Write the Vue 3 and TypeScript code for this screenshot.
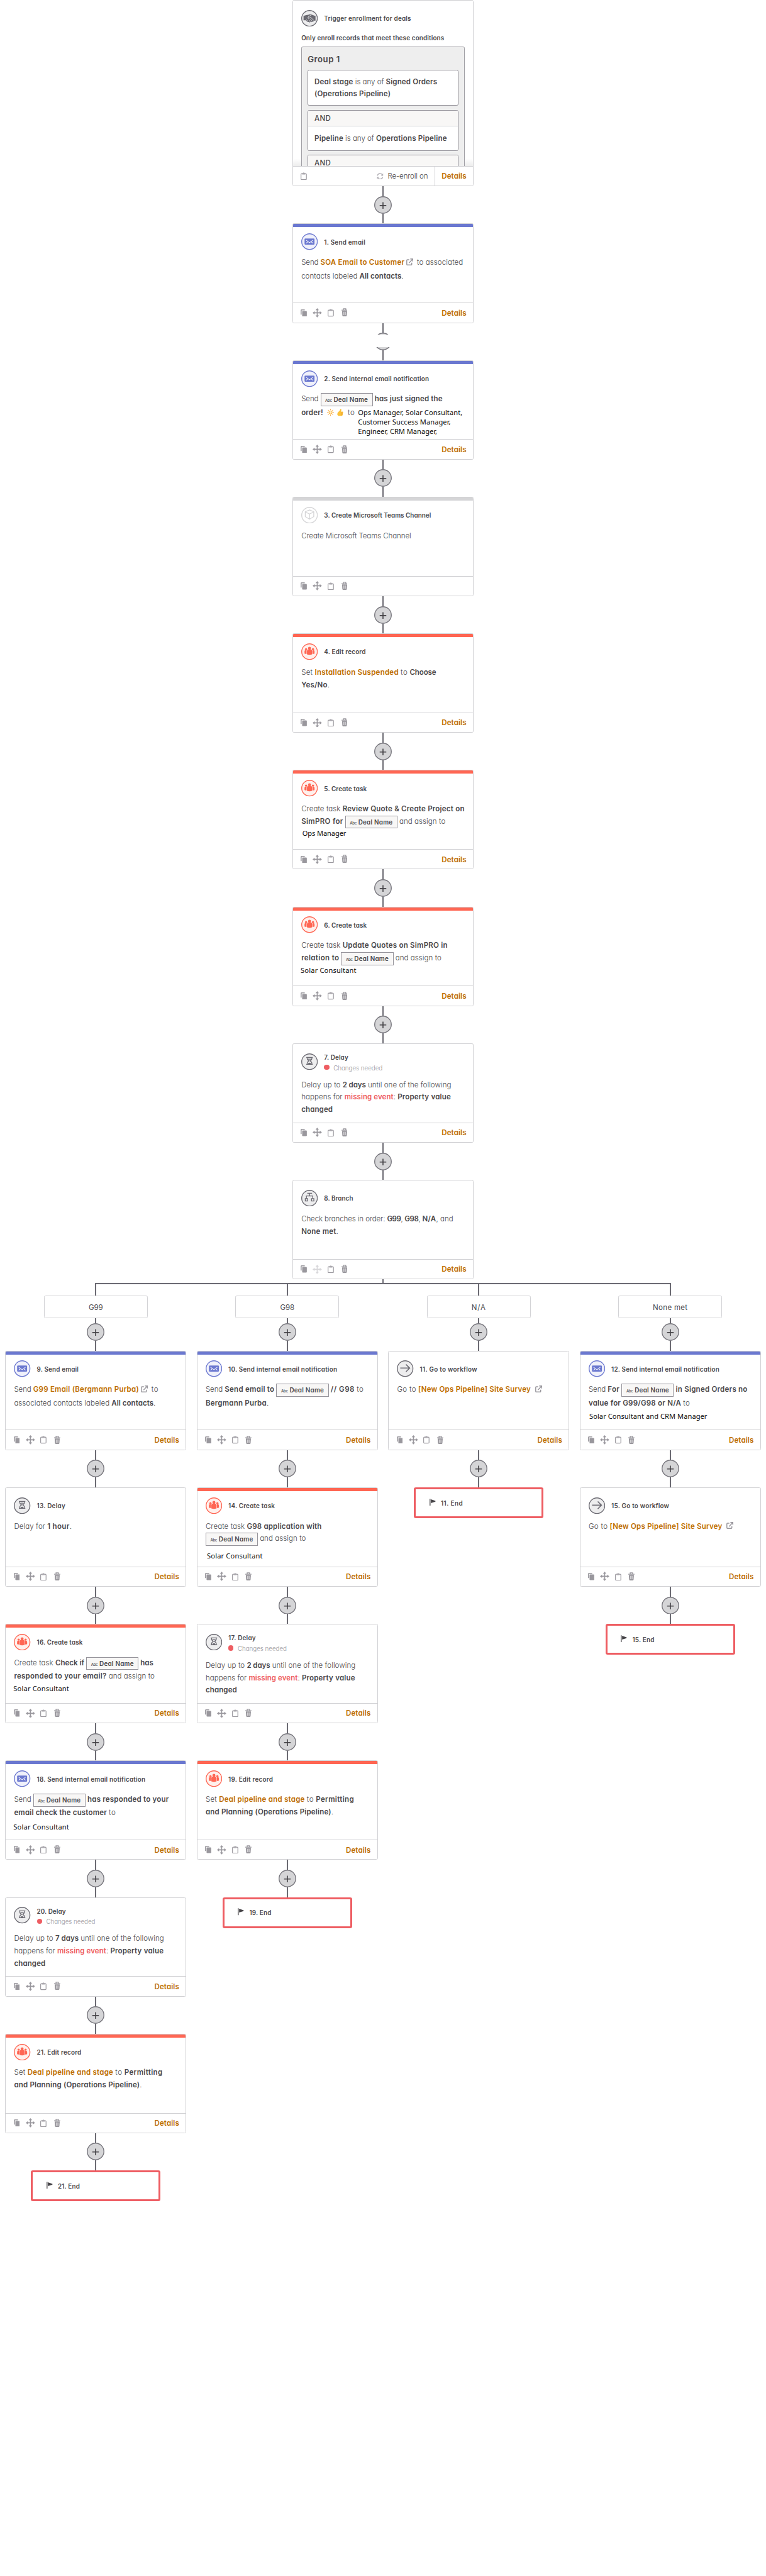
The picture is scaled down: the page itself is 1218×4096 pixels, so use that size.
<script setup lang="ts">
type Seg = { t?: string; w?: number; k?: 'b' | 'link' | 'err' | 'chip' | 'ext' | 'extw' | 'emoji'; tail?: string }
type Row = { segs: Seg[]; notes?: [string, number][] }
type Note = { t: string; w: number; mt: number; ml: number }
type Step = {
  kind: 'step' | 'end' | 'trigger'
  tone?: 'blue' | 'coral' | 'gray' | 'dark'
  icon?: 'mail' | 'people' | 'cube' | 'wait' | 'tree' | 'arrow'
  title: string
  tw: number
  rows?: Row[]
  note?: Note
  warn?: boolean
  noDetails?: boolean
  lockMove?: boolean
  broken?: boolean
}
type Column = { label?: string; lw?: number; steps: Step[] }

const DESIGN_WIDTH = 1480

// Spreads a run of text over its design width by adjusting the tracking.
const vFit = {
  mounted(el: HTMLElement, binding: { value?: number }) {
    if (!binding.value) return
    const root = el.closest('.flow') as HTMLElement
    const scale = root.getBoundingClientRect().width / DESIGN_WIDTH
    const natural = el.getBoundingClientRect().width / scale
    const count = (el.textContent ?? '').trim().length
    el.style.letterSpacing = `${((binding.value + 0.8 - natural) / count).toFixed(3)}px`
  },
}

const s = (t: string, w: number): Seg => ({ t, w })
const b = (t: string, w: number, tail = ''): Seg => ({ t, w, k: 'b', tail })
const link = (t: string, w: number): Seg => ({ t, w, k: 'link' })
const chip: Seg = { k: 'chip' }
const row = (...segs: Seg[]): Row => ({ segs })
const send = s('Send', 32.3)
const task = s('Create task', 75)
const assign = s('and assign to', 88.3)
const to = s('to', 13)

const delayRows = (days: string): Row[] => [
  row(s('Delay up to', 75), b(days, 44.3), s('until one of the following', 160.3)),
  row(s('happens for', 78.7), { t: 'missing event', w: 98, k: 'err', tail: ':' }, b('Property value', 102.3)),
  row(b('changed', 60)),
]
const stageRows: Row[] = [
  row(s('Set', 21.3), link('Deal pipeline and stage', 165), to, b('Permitting', 73)),
  row(b('and Planning (Operations Pipeline)', 246.3, '.')),
]
const surveyRows: Row[] = [
  row(s('Go to', 36.3), link('[New Ops Pipeline] Site Survey', 216.6), { k: 'extw' }),
]

const mail = (title: string, tw: number, rows: Row[], extra: Partial<Step> = {}): Step =>
  ({ kind: 'step', tone: 'blue', icon: 'mail', title, tw, rows, ...extra })
const crm = (title: string, tw: number, rows: Row[], note?: Note): Step =>
  ({ kind: 'step', tone: 'coral', icon: 'people', title, tw, rows, note })
const plain = (icon: Step['icon'], title: string, tw: number, rows: Row[], extra: Partial<Step> = {}): Step =>
  ({ kind: 'step', tone: 'dark', icon, title, tw, rows, ...extra })
const end = (n: number): Step => ({ kind: 'end', title: `${n}. End`, tw: 42 })
const solar = (mt: number, ml: number): Note => ({ t: 'Solar Consultant', w: 107, mt, ml })

const trunk: Column = {
  steps: [
    { kind: 'trigger', tone: 'dark', title: 'Trigger enrollment for deals', tw: 167.3 },
    mail('1. Send email', 79, [
      row(send, link('SOA Email to Customer', 161.7), { k: 'ext' }, s('to associated', 88.3)),
      row(s('contacts labeled', 107.7), b('All contacts', 84.3, '.')),
    ], { broken: true }),
    mail('2. Send internal email notification', 202, [
      row(send, chip, b('has just signed the', 130.3)),
      {
        segs: [b('order!', 41.3), { k: 'emoji' }, to],
        notes: [['Ops Manager, Solar Consultant,', 201], ['Customer Success Manager,', 178.3], ['Engineer, CRM Manager,', 152]],
      },
    ]),
    { kind: 'step', tone: 'gray', icon: 'cube', title: '3. Create Microsoft Teams Channel', tw: 205.7, noDetails: true,
      rows: [row(s('Create Microsoft Teams Channel', 211.3))] },
    crm('4. Edit record', 79.7, [
      row(s('Set', 21.3), link('Installation Suspended', 161.3), to, b('Choose', 50.3)),
      row(b('Yes/No', 54, '.')),
    ]),
    crm('5. Create task', 81.7, [
      row(task, b('Review Quote & Create Project on', 235)),
      row(b('SimPRO for', 80), chip, assign),
    ], { t: 'Ops Manager', w: 83.7, mt: 0, ml: 2 }),
    crm('6. Create task', 81.7, [
      row(task, b('Update Quotes on SimPRO in', 202.3)),
      row(b('relation to', 72.3), chip, assign),
    ], solar(1, -1.3)),
    plain('wait', '7. Delay', 46, delayRows('2 days'), { warn: true }),
    plain('tree', '8. Branch', 55.3, [
      row(s('Check branches in order:', 161), b('G99', 29.3, ','), b('G98', 29.7, ','), b('N/A', 30, ','), s('and', 24.3)),
      row(b('None met', 70.7, '.')),
    ], { lockMove: true }),
  ],
}

const branches: Column[] = [
  {
    label: 'G99', lw: 26.4,
    steps: [
      mail('9. Send email', 79.8, [
        row(send, link('G99 Email (Bergmann Purba)', 203.4), { k: 'ext' }, to),
        row(s('associated contacts labeled', 183.6), b('All contacts', 84.3, '.')),
      ]),
      plain('wait', '13. Delay', 54.3, [row(s('Delay for', 59.5), b('1 hour', 46.7, '.'))]),
      crm('16. Create task', 87.8, [
        row(task, b('Check if', 55.2), chip, b('has', 24)),
        row(b('responded to your email?', 178), assign),
      ], solar(3, -1.3)),
      mail('18. Send internal email notification', 209, [
        row(send, chip, b('has responded to your', 156.7)),
        row(b('email check the customer', 178.4), to),
      ], { note: solar(6, -1.3) }),
      plain('wait', '20. Delay', 55, delayRows('7 days'), { warn: true }),
      crm('21. Edit record', 85.3, stageRows),
      end(21),
    ],
  },
  {
    label: 'G98', lw: 26.4,
    steps: [
      mail('10. Send internal email notification', 209.5, [
        row(send, b('Send email to', 95.3), chip, b('// G98', 45.8), to),
        row(b('Bergmann Purba', 121.3, '.')),
      ]),
      crm('14. Create task', 89.2, [
        row(task, b('G98 application with', 144)),
        row(chip, assign),
      ], solar(10, 2.6)),
      plain('wait', '17. Delay', 52.4, delayRows('2 days'), { warn: true }),
      crm('19. Edit record', 85.4, stageRows),
      end(19),
    ],
  },
  {
    label: 'N/A', lw: 27,
    steps: [plain('arrow', '11. Go to workflow', 110, surveyRows), end(11)],
  },
  {
    label: 'None met', lw: 66.5,
    steps: [
      mail('12. Send internal email notification', 208, [
        row(send, b('For', 22.2), chip, b('in Signed Orders no', 137.8)),
        row(b('value for G99/G98 or N/A', 178), to),
      ], { note: { t: 'Solar Consultant and CRM Manager', w: 227, mt: 4, ml: 1.4 } }),
      plain('arrow', '15. Go to workflow', 111, surveyRows),
      end(15),
    ],
  },
]

const sections: Column[][] = [[trunk], branches]
const isTall = (r: Row) => r.segs.some(x => x.k === 'chip' || x.k === 'ext' || x.k === 'extw')
</script>

<template>
  <main class="flow">
    <template v-for="(section, si) in sections" :key="si">
      <div v-if="si === 1" class="split">
        <i class="line drop"></i>
        <i class="bar"></i>
      </div>
      <div class="section">
        <div v-for="(col, ci) in section" :key="ci" class="column">
          <template v-if="col.label">
            <i class="line stem"></i>
            <div class="label"><span v-fit="col.lw">{{ col.label }}</span></div>
            <i class="line short"></i>
            <svg class="plus" viewBox="0 0 34 34"><circle cx="17" cy="17" r="16.1" /><path d="M17 11.6v12.8M10.6 18h12.8" /></svg>
            <i class="line"></i>
          </template>

          <template v-for="(step, i) in col.steps" :key="step.title">
            <div v-if="step.kind === 'end'" class="end">
              <svg class="flag" viewBox="0 0 12 14"><path d="M1 .4v13.2" stroke="#434145" stroke-width="1.6" /><path d="M2.6 1.2 11.4 4.3v1.4L2.6 8.4z" fill="#434145" /></svg>
              <span v-fit="step.tw" class="title">{{ step.title }}</span>
            </div>

            <article v-else class="card" :class="[step.tone, step.kind]">
              <div v-if="step.tone !== 'dark'" class="band"></div>
              <div class="content">
                <header class="head" :class="{ warned: step.warn }">
                  <svg class="badge" viewBox="0 0 32 32">
                    <circle class="ring" cx="16" cy="16" r="15.1" />
                    <template v-if="step.kind === 'trigger'">
                      <path class="fill" d="M4.4 11.3 9.6 9.8l4.2-.6 2-.9 3.4.2 8.4 3v8.9l-3 .3-1.8 2.1-2.2-.2-1 .9-2-.3-1.6.9-1.6-1-2-.4-4.4-2.9-3.6-.2z" />
                      <path class="cut" d="M19.2 9.8 14 12.6l-1.2 3 2.2.5 3-2.3 6.2 6.2M17.6 17.6l3.4 4M14.6 19l3 3.8M8.4 20.4l2-1.4 1.4 1.4" />
                    </template>
                    <template v-else-if="step.icon === 'mail'">
                      <rect class="fill" x="6.4" y="10" width="19.2" height="12" rx="1.6" />
                      <path d="m9.4 13.2 5.3 4 1.3.8 1.3-.8 5.3-4M9.4 19l3-2.3M22.6 19l-3-2.3" fill="none" stroke="#f1f2fb" stroke-width="1.3" />
                    </template>
                    <g v-else-if="step.icon === 'people'" class="fill">
                      <circle cx="16" cy="9.6" r="2.9" /><path d="M11 21.4v-6.6q0-3 3-3h4q3 0 3 3v6.6q-5 1.4-10 0z" />
                      <circle cx="9.3" cy="11.1" r="2.1" /><path d="M6.3 19.6v-4.2q0-2.3 2.3-2.3h1.7v7.4q-2.5 0-4-.9z" />
                      <circle cx="22.7" cy="11.1" r="2.1" /><path d="M25.7 19.6v-4.2q0-2.3-2.3-2.3h-1.7v7.4q2.5 0 4-.9z" />
                    </g>
                    <path v-else-if="step.icon === 'cube'" class="stroke" d="m16 6 8.2 3.4v9.4L16 23.8 7.8 18.8V9.4zM7.8 9.7l8.2 4 8.2-4M16 13.7v10" />
                    <template v-else-if="step.icon === 'wait'">
                      <path class="stroke" d="M9.8 7.7h12.4M9.8 21.2h12.4M11.5 8v2.6q0 1.5 3.3 3.8-3.3 2.3-3.3 3.8V21M20.5 8v2.6q0 1.5-3.3 3.8 3.3 2.3 3.3 3.8V21M13 11.2h6" />
                      <path class="fill" d="M12.8 20.8q.6-2.800 3.200-2.800t3.200 2.800z" />
                    </template>
                    <path v-else-if="step.icon === 'tree'" class="stroke" d="M11.7 6.6h9.2M16 7v4.6M10 16.5v-4.7h12.2v4.7M7.8 16.8h4.6v4.6H7.8zM19.8 16.8h4.6v4.6h-4.6z" />
                    <path v-else class="stroke arrow" d="M6.6 15h18.2M17.6 7.9l7.2 7.1-7.2 7.1" />
                  </svg>
                  <div class="names">
                    <div><span v-fit="step.tw" class="title">{{ step.title }}</span></div>
                    <div v-if="step.warn" class="warn"><i></i><span v-fit="94">Changes needed</span></div>
                  </div>
                </header>

                <template v-if="step.kind === 'trigger'">
                  <div class="only"><span v-fit="275.3">Only enroll records that meet these conditions</span></div>
                  <div class="group">
                    <h3><span v-fit="62">Group 1</span></h3>
                    <div class="cond first">
                      <p><b v-fit="74">Deal stage</b><span v-fit="54.7">is any of</span><b v-fit="98.3">Signed Orders</b></p>
                      <p><b v-fit="146.3">(Operations Pipeline)</b></p>
                    </div>
                    <div class="cond second">
                      <div class="and"><span v-fit="30.7">AND</span></div>
                      <p><b v-fit="55">Pipeline</b><span v-fit="54.7">is any of</span><b v-fit="136.3">Operations Pipeline</b></p>
                    </div>
                    <div class="cond third"><div class="and"><span v-fit="30.7">AND</span></div></div>
                  </div>
                </template>

                <div v-else class="body">
                  <div v-for="(r, ri) in step.rows" :key="ri" class="row" :class="{ tall: isTall(r) }">
                    <template v-for="(seg, gi) in r.segs" :key="gi">
                      <span v-if="seg.k === 'chip'" class="chip"><small v-fit="12">Abc</small><span v-fit="65.7">Deal Name</span></span>
                      <svg v-else-if="seg.k === 'ext' || seg.k === 'extw'" class="ext" :class="seg.k" viewBox="0 0 14 14">
                        <path d="M6 2.6H2.2q-1.200 0-1.200 1.200v8q0 1.200 1.200 1.200h7.600q1.200 0 1.200-1.200V8.600M8 1h5v5M13 1 5.400 9" />
                      </svg>
                      <span v-else-if="seg.k === 'emoji'" class="emoji">
                        <svg viewBox="0 0 14 14"><circle cx="7" cy="7" r="3.2" fill="#fff2cf" stroke="#f9b13c" stroke-width="1.3" /><path d="M7 0v2.200M7 11.800V14M0 7h2.200M11.800 7H14M2 2l1.500 1.500M10.500 10.500 12 12M12 2l-1.500 1.500M3.500 10.500 2 12" stroke="#f9a94a" stroke-width="1.3" /></svg>
                        <svg viewBox="0 0 12 14"><path d="M6.300.300q1.900-.5 1.900 1.500 0 1.900-.9 3.700h3.200q1.300.2 1 1.600l-1 5.400q-.4 1.300-1.700 1.300H4.100Q.4 13.400.4 10.200.4 7 2.800 5.700 5.700 3.600 6.300.300z" fill="#fbc13a" /><path d="M7.400 7.400h4M7.300 9.500h3.700M7.200 11.600h3.400" stroke="#ee9b2b" stroke-width=".7" /></svg>
                      </span>
                      <span v-else v-fit="seg.w" class="seg"><span :class="seg.k">{{ seg.t }}</span>{{ seg.tail }}</span>
                    </template>
                    <div v-if="r.notes" class="notes">
                      <div v-for="n in r.notes" :key="n[0]"><span v-fit="n[1]">{{ n[0] }}</span></div>
                    </div>
                  </div>
                  <div v-if="step.note" class="note" :style="{ marginTop: step.note.mt + 'px', marginLeft: step.note.ml + 'px' }">
                    <span v-fit="step.note.w">{{ step.note.t }}</span>
                  </div>
                </div>
              </div>

              <footer class="foot">
                <svg v-if="step.kind !== 'trigger'" class="tool copy" viewBox="0 0 12 14"><path d="M1 10V2q0-1.100 1.100-1.100H8" fill="none" stroke="#99979d" stroke-width="1.9" /><rect x="3" y="3" width="9" height="11" rx="1.5" fill="#99979d" /></svg>
                <svg v-if="step.kind !== 'trigger'" class="tool move" :class="{ locked: step.lockMove }" viewBox="0 0 18 18"><path d="M9 3v12M3 9h12" stroke="currentColor" stroke-width="1.9" /><path d="m9 0 3.300 4H5.700zM9 18l3.300-4H5.700zM0 9l4-3.300v6.600zM18 9l-4-3.300v6.600z" fill="currentColor" /></svg>
                <svg class="tool clip" viewBox="0 0 12 15"><rect x=".8" y="2.5" width="10.4" height="11.7" rx="1.5" fill="none" stroke="#99979d" stroke-width="1.4" /><path d="M3 4.200V2.500q0-.9 1-.9h.6Q5 .2 6 .2t1.400 1.400H8q1 0 1 .9v1.700z" fill="#aaa8ae" /></svg>
                <svg v-if="step.kind !== 'trigger'" class="tool bin" viewBox="0 0 12 16"><path d="M0 3.700h12M3.700 3.400V1h4.600v2.400" fill="none" stroke="#99979d" stroke-width="1.6" /><path d="M1.100 5.300h9.800l-.6 9q-.1 1.400-1.400 1.400H3.100q-1.300 0-1.400-1.400z" fill="#99979d" /><path d="M4.600 7.200v6.200M7.400 7.200v6.200" stroke="#f3f3f4" stroke-width="1.1" /></svg>
                <span class="spacer"></span>
                <template v-if="step.kind === 'trigger'">
                  <svg class="tool again" viewBox="0 0 14 14"><path d="M1.400 5.600A5.600 5.600 0 0 1 11.600 3.800M12.600 8.400A5.600 5.600 0 0 1 2.400 10.200" fill="none" stroke="#b3b1b7" stroke-width="1.9" /><path d="M13.400 1v5H8.600zM.6 13V8h4.800z" fill="#b3b1b7" /></svg>
                  <span class="again-text"><span v-fit="76.7">Re-enroll on</span></span>
                </template>
                <span v-if="!step.noDetails" class="details"><span v-fit="47">Details</span></span>
              </footer>
            </article>

            <template v-if="i < col.steps.length - 1">
              <i class="line"></i>
              <div class="node" :class="{ broken: step.broken }">
                <svg class="plus" viewBox="0 0 34 34"><circle cx="17" cy="17" r="16.1" /><path d="M17 11.6v12.8M10.6 18h12.8" /></svg>
              </div>
              <i class="line"></i>
            </template>
          </template>
        </div>
      </div>
    </template>
  </main>
</template>

<style>
body { background: #fff; overflow: hidden; }
</style>

<style scoped>
.flow {
  width: 1480px;
  height: 4977px;
  zoom: 0.823;
  overflow: hidden;
  background: #fff;
  color: #4a484b;
  font-family: Inter, "Open Sans", sans-serif;
  font-feature-settings: "cv11";
  font-size: 14px;
  font-weight: 330;
}
.flow * { box-sizing: border-box; }
svg { display: block; flex: none; }
.section { display: flex; justify-content: center; }
.column { width: 370px; display: flex; flex-direction: column; align-items: center; }
.line { display: block; width: 2px; height: 19px; background: #6c6b73; }
.line.short { height: 10px; }
.line.stem { height: 22px; }
.line.drop { height: 8px; }
.split { display: flex; flex-direction: column; align-items: center; height: 10px; }
.bar { width: 1112px; height: 2.5px; flex: none; background: #6c6b73; }
.plus { width: 34px; height: 34px; }
.plus circle { fill: #d5d5d7; stroke: #75747b; stroke-width: 1.7; }
.plus path { stroke: #434145; stroke-width: 1.9; fill: none; }
.node { position: relative; height: 34px; width: 34px; }
.node.broken::after { content: ""; position: absolute; inset: 4px -4px 6px; background: #fff; }
.label {
  width: 200px; height: 43px; border: 1px solid #d3d3d6; border-radius: 3px; background: #fff;
  display: flex; align-items: center; justify-content: center; font-weight: 400; white-space: nowrap; padding-top: 1px;
}
.end {
  width: 250px; height: 60px; border: 4px solid #ee5d62; border-radius: 4px; background: #fff;
  display: flex; align-items: center; padding-left: 26px;
}
.flag { width: 12px; height: 14px; margin-right: 10px; margin-top: -3px; }
.title { font-size: 12px; font-weight: 600; white-space: nowrap; }
.card {
  position: relative; width: 350px; height: 192px; background: #fff; border: 1px solid #d1d1d4;
  border-radius: 3px; display: flex; flex-direction: column; overflow: hidden;
}
.card.trigger { height: 360px; }
.band { position: absolute; top: 0; left: 0; right: 0; height: 6px; background: #6b78d0; }
.coral .band { background: #ff6653; }
.gray .band { background: #d5d5d7; }
.content { flex: 1; min-height: 0; padding: 18px 15px 0 16px; overflow: hidden; }
.head { display: flex; height: 32px; }
.head.warned { height: 37px; }
.badge { width: 32px; height: 32px; margin-right: 12px; }
.names { padding-top: 6.5px; line-height: 20px; }
.warned .names { padding-top: 0; margin-top: -2px; }
.warn { display: flex; align-items: center; font-size: 12px; color: #99979d; white-space: nowrap; height: 20px; }
.warn i { width: 10px; height: 10px; border-radius: 50%; background: #ee5d62; margin-right: 8px; margin-top: -1px; }
.ring { fill: #ededee; stroke: #6b6a72; stroke-width: 1.7; }
.fill { fill: #6b6a72; }
.stroke { fill: none; stroke: #6b6a72; stroke-width: 1.6; }
.arrow { stroke-width: 1.9; }
.cut { fill: none; stroke: #ededee; stroke-width: 1.1; }
.blue .ring { fill: #f0f1fb; stroke: #6b78d0; }
.blue .fill { fill: #6b78d0; }
.coral .ring { fill: #fff0ec; stroke: #ff6653; }
.coral .fill { fill: #ff6653; }
.gray .ring { fill: #fff; stroke: #d5d5d7; }
.gray .stroke { stroke: #d5d5d7; }
.body { padding-top: 12.8px; }
.row { display: flex; height: 24px; line-height: 24px; gap: 3.8px; white-space: nowrap; }
.row.tall { height: 26px; }
.b, .link, .err, b { font-weight: 600; }
.link { color: #bd6d00; }
.err { color: #ee5d62; }
.chip {
  width: 101px; height: 25px; border: 1px solid #96949b; background: #f8f7f6;
  display: flex; align-items: baseline; padding-left: 8px; gap: 3.4px; line-height: 22.5px; font-size: 12px; font-weight: 600; flex: none;
}
.chip small { font-size: 7.5px; font-weight: 500; }
.ext { width: 13.5px; height: 13.5px; margin-top: 3.500px; margin-right: 3px; }
.ext.extw { margin-left: 4px; }
.ext path { fill: none; stroke: #99979d; stroke-width: 1.8; }
.emoji { display: flex; gap: 7px; margin: 4.500px 4.500px 0 3.200px; }
.emoji svg { width: 13.5px; height: 14px; }
.emoji svg + svg { width: 12px; }
.notes { padding-top: 3px; margin-left: 2px; }
.notes, .note { font-family: "Noto Sans", sans-serif; font-weight: 400; font-size: 13.5px; line-height: 18px; color: #0c0c0c; white-space: nowrap; }
.foot { height: 38px; flex: none; border-top: 1px solid #d1d1d4; display: flex; align-items: center; padding-left: 15px; background: #fff; }
.tool.copy { width: 12px; height: 14px; margin-right: 11px; }
.tool.move { width: 18px; height: 18px; margin-right: 11px; color: #99979d; }
.tool.move.locked { color: #d8d7da; }
.tool.clip { width: 12px; height: 15px; margin-right: 14px; }
.tool.bin { width: 12px; height: 16px; margin-top: -1px; }
.spacer { flex: 1; }
.details { color: #bd6d00; font-weight: 600; padding-right: 12.7px; padding-top: 1px; white-space: nowrap; }
.tool.again { width: 13px; height: 13px; margin-right: 8.5px; }
.again-text { padding-right: 12.5px; white-space: nowrap; }
.trigger .details { height: 37px; line-height: 36px; border-left: 1px solid #d1d1d4; padding-left: 13px; }
.only { margin-top: 11.6px; height: 27.4px; line-height: 20px; font-size: 12px; font-weight: 600; white-space: nowrap; }
.trigger .content { background: linear-gradient(#fff, #ececec) bottom / 100% 15px no-repeat; }
.group { width: 316px; height: 300px; background: #eee; border: 1px solid #a09fa5; border-radius: 3px; padding: 0 11px; }
.group h3 { margin: 0; height: 43px; padding-top: 12px; font-size: 16px; line-height: 24px; font-weight: 600; white-space: nowrap; }
.cond { border: 1px solid #96949b; border-radius: 3px; background: #fff; margin-bottom: 8px; overflow: hidden; }
.cond.first { height: 70px; padding-top: 12px; }
.cond.second { height: 79px; }
.cond.third { height: 79px; }
.cond p { margin: 0; display: flex; gap: 3.8px; line-height: 22px; padding-left: 12px; white-space: nowrap; }
.cond.second p { padding-top: 12px; }
.and { height: 31px; line-height: 30px; padding-left: 12px; background: #f8f7f6; border-bottom: 1px solid #d1d1d4; font-weight: 500; white-space: nowrap; }
</style>
